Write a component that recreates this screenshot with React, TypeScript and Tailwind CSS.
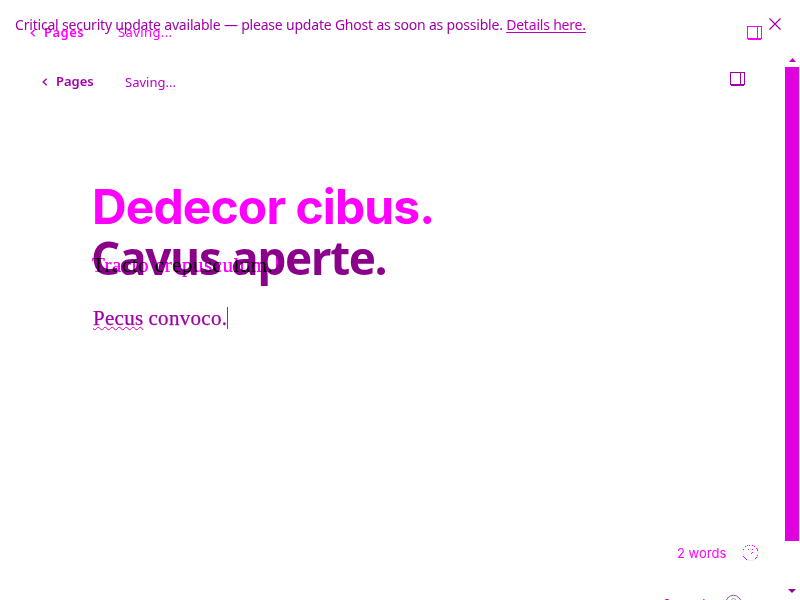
import React from 'react';

const ui = "font-['Noto_Sans',sans-serif]";
const serif = "font-['Liberation_Serif',serif] text-[21px] leading-[30px]";

function Panel({ color }: { color: string }) {
  return (
    <svg width="15" height="14" viewBox="0 0 15 14" fill="none" stroke={color} shapeRendering="crispEdges">
      <path d="M.5 .5h14v12h-14zM10.5 .5v12M.5 13.5h13.5" />
    </svg>
  );
}

function Chevron({ color }: { color: string }) {
  return (
    <svg width="6" height="8" viewBox="0 0 6 8" fill="none" stroke={color} strokeWidth="1.3">
      <path d="M4.6.7 1.2 4l3.4 3.3" />
    </svg>
  );
}

function Help() {
  return (
    <svg width="18" height="18" viewBox="0 0 18 18" fill="none" shapeRendering="crispEdges">
      <circle cx="8.5" cy="9" r="7.7" stroke="#eee" />
      <path
        fill="#f0f"
        d="M5 1h1v1H5zM7 1h1v1H7zM10 1h1v1h-1zM12 2h1v1h-1zM3 2h1v1H3zM14 4h1v1h-1zM15 5h1v2h-1zM1 5h1v1H1zM6 5h1v1H6zM10 5h1v1h-1zM10 8h1v1h-1zM9 9h1v1H9zM15 11h1v1h-1zM14 13h1v1h-1zM13 14h1v1h-1zM1 12h1v1H1zM2 13h1v1H2zM3 14h1v1H3zM4 15h1v1H4z"
      />
    </svg>
  );
}

function Before() {
  return (
    <div className="col-start-1 row-start-1 flex h-[600px] flex-col overflow-hidden text-[#ff00ff]">
      <div className={`flex h-[66px] items-center pl-[30px] pr-[38px] text-[13px] ${ui}`}>
        <Chevron color="#ff00ff" />
        <span className="ml-[8px] w-[74px] font-semibold tracking-[0.5px]">Pages</span>
        <span className="grow tracking-[0.4px]">Saving...</span>
        <Panel color="#ff00ff" />
      </div>
      <h1 className="mt-[111px] h-[60px] pl-[92px] font-['Inter',sans-serif] text-[48px] font-bold leading-[60px] tracking-[-0.9px]">Dedecor cibus.</h1>
      <div className="grow" />
      <div className="mb-[38px] flex h-[18px] items-center pl-[677px] font-['Inter',sans-serif] text-[13px]">
        <span className="w-[65px] pt-[2px]">2 words</span>
        <Help />
      </div>
    </div>
  );
}

function After() {
  return (
    <div className="relative col-start-1 row-start-1 flex h-[600px] flex-col overflow-hidden text-[#a000a8]">
      <div className={`flex h-[50px] items-center pl-[15px] pr-[18px] text-[14px] ${ui}`}>
        <p className="grow whitespace-nowrap pb-px tracking-[-0.2px]">
          Critical security update available — please update Ghost as soon as possible.{' '}
          <a className="text-[#b800b8] underline underline-offset-2">Details here.</a>
        </p>
        <svg className="mb-[2px]" width="14" height="14" viewBox="0 0 14 14" stroke="#a000a8" strokeWidth="1.2">
          <path d="m1.5 1.5 11 11m0-11-11 11" />
        </svg>
      </div>
      <div className={`flex h-[64px] items-center pl-[42px] pr-[55px] text-[13px] ${ui}`}>
        <Chevron color="#a000a8" />
        <span className="ml-[8px] w-[69px] font-semibold">Pages</span>
        <span className="grow pt-[2px] text-[#b800c8]">Saving...</span>
        <span className="mb-[6px]">
          <Panel color="#a000a8" />
        </span>
      </div>
      <h1 className="mt-[113px] h-[60px] pl-[91px] font-['Open_Sans',sans-serif] text-[46px] font-bold leading-[60px] tracking-[-1.4px] text-[#8b008b]">
        Cavus aperte.
      </h1>
      <p className={`mt-[16px] flex h-[30px] items-center pl-[93px] tracking-[0.3px] [-webkit-text-stroke:0.25px] ${serif}`}>
        <span className="underline decoration-[#e000a0] decoration-wavy decoration-1 underline-offset-1">Pecus</span>
        <span className="ml-[5px]">convoco.</span>
        <span className="h-[22px] w-px bg-[#c800d8]" />
      </p>
      <div className="grow" />
      <div className="flex h-[6px] overflow-hidden pl-[663px] font-['Inter',sans-serif] text-[13px] leading-[18px]">
        <span className="w-[62px] pt-px">2 words</span>
        <svg className="shrink-0" width="18" height="18" fill="none">
          <circle cx="8.5" cy="9" r="7.7" stroke="#886088" />
          <circle cx="8.5" cy="7" r="2.5" stroke="#aaa" />
        </svg>
      </div>
    </div>
  );
}

export default function App() {
  return (
    <main className="grid h-[600px] w-[800px] grid-cols-[800px] overflow-hidden bg-white">
      <Before />
      <After />
      <p className={`relative col-start-1 row-start-1 mt-[250px] flex h-[30px] items-center pl-[92px] tracking-[0.5px] text-[#f0f] mix-blend-multiply ${serif}`}>
        Tracto crepusculum.
        <span className="ml-[3px] h-[20px] w-px bg-[#f0f]" />
      </p>
      <p aria-hidden="true" className={`relative col-start-1 row-start-1 mt-[250px] h-[30px] pl-[92px] tracking-[0.5px] text-[#606060] mix-blend-color-burn ${serif}`}>
        Tracto crepusculum.
      </p>
      <div className="relative col-start-1 row-start-1 ml-[785px] flex h-[600px] w-[14px] flex-col items-center">
        <svg className="mt-[58px] shrink-0" width="7" height="4">
          <path d="M0 4 3.5 0 7 4z" fill="#c000c0" />
        </svg>
        <div className="mt-[5px] h-[474px] w-full shrink-0 bg-[#e000e0]" />
        <svg className="mt-[48px] shrink-0" width="8" height="4">
          <path d="M0 0h8L4 4z" fill="#900090" />
        </svg>
      </div>
    </main>
  );
}
